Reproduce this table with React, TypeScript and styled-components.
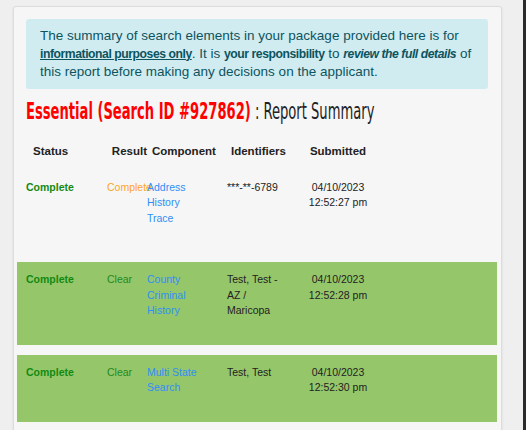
import styled, { createGlobalStyle } from 'styled-components';

const GlobalStyle = createGlobalStyle`
  html, body {
    margin: 0;
    padding: 0;
    background: #efefef;
  }
  body {
    font-family: "Liberation Sans", Arial, sans-serif;
  }
`;

const Page = styled.div`
  box-sizing: border-box;
  width: 526px;
  height: 430px;
  overflow: hidden;
  padding: 6px 21px 0 13px;
  border-right: 3px solid #2b2b2b;
`;

const Card = styled.div`
  box-sizing: border-box;
  width: 489px;
  min-height: 440px;
  background: #f6f6f6;
  border: 1px solid #dcdcdc;
  border-radius: 3px;
  box-shadow: 0 1px 3px rgba(0, 0, 0, 0.08);
  padding: 12px 13px 0 12px;
`;

const Notice = styled.div`
  background: #d1ecf1;
  color: #0c5460;
  border-radius: 3px;
  padding: 8px 14px;
  font-size: 13.5px;
  line-height: 17.5px;
`;

// the bold face in the reference is narrower than Liberation Sans Bold
const Strong = styled.b<{ $underline?: boolean; $italic?: boolean }>`
  font-size: 12.2px;
  letter-spacing: -0.45px;
  text-decoration: ${(p) => (p.$underline ? 'underline' : 'none')};
  font-style: ${(p) => (p.$italic ? 'italic' : 'normal')};
`;

const Heading = styled.h2`
  display: inline-block;
  margin: 10px 0 0;
  font-family: "DejaVu Sans Condensed", "DejaVu Sans", sans-serif;
  font-size: 23.5px;
  line-height: 25px;
  font-weight: normal;
  color: #222;
  white-space: nowrap;
  transform: scaleX(0.62);
  transform-origin: left center;
`;

const HeadingRed = styled.span`
  color: #ff0000;
  font-weight: bold;
`;

const Table = styled.div`
  display: flex;
  flex-direction: column;
  gap: 10px;
  margin: 18px -9px 0 -9px;
`;

const Row = styled.div<{ $green?: boolean; $head?: boolean }>`
  display: grid;
  grid-template-columns: 90px 40px 80px 80px 62px 1fr;
  align-items: start;
  background: ${(p) => (p.$green ? '#96c66a' : 'transparent')};
  padding: ${(p) => (p.$head ? '0' : '10px 0 26px')};
`;

const HeadCell = styled.div<{ $align?: string; $pad?: number }>`
  font-size: 11.5px;
  line-height: 18px;
  font-weight: bold;
  color: #222;
  text-align: ${(p) => p.$align || 'left'};
  padding-left: ${(p) => p.$pad || 0}px;
`;

const Cell = styled.div<{ $color?: string; $bold?: boolean; $pad?: number; $center?: boolean; $narrow?: number }>`
  font-size: 10.5px;
  line-height: 15.5px;
  color: ${(p) => p.$color || '#222'};
  font-weight: ${(p) => (p.$bold ? 'bold' : 'normal')};
  padding-left: ${(p) => p.$pad || 0}px;
  padding-right: ${(p) => p.$narrow || 0}px;
  text-align: ${(p) => (p.$center ? 'center' : 'left')};
  white-space: ${(p) => (p.$center ? 'nowrap' : 'normal')};
`;

const Link = styled.a`
  color: #2f8ff5;
  text-decoration: none;
`;

interface SearchRow {
  result: string;
  resultColor: string;
  component: string;
  identifiers: string;
  date: string;
  time: string;
  green?: boolean;
}

const rows: SearchRow[] = [
  { result: 'Complete', resultColor: '#ffa51e', component: 'Address History Trace', identifiers: '***-**-6789', date: '04/10/2023', time: '12:52:27 pm' },
  { result: 'Clear', resultColor: '#1e8a1e', component: 'County Criminal History', identifiers: 'Test, Test - AZ / Maricopa', date: '04/10/2023', time: '12:52:28 pm', green: true },
  { result: 'Clear', resultColor: '#1e8a1e', component: 'Multi State Search', identifiers: 'Test, Test', date: '04/10/2023', time: '12:52:30 pm', green: true },
];

export default function App() {
  return (
    <>
      <GlobalStyle />
      <Page>
        <Card>
          <Notice>
            The summary of search elements in your package provided here is for{' '}
            <Strong $underline>informational purposes only</Strong>. It is <Strong>your responsibility</Strong> to{' '}
            <Strong $italic>review the full details</Strong> of this report before making any decisions on the applicant.
          </Notice>
          <Heading>
            <HeadingRed>Essential (Search ID #927862)</HeadingRed> : Report Summary
          </Heading>
          <Table>
            <Row $head>
              <HeadCell $pad={16}>Status</HeadCell>
              <HeadCell $align="right">Result</HeadCell>
              <HeadCell $pad={5}>Component</HeadCell>
              <HeadCell $pad={4}>Identifiers</HeadCell>
              <HeadCell $align="center">Submitted</HeadCell>
            </Row>
            {rows.map((r) => (
              <Row key={r.component} $green={r.green}>
                <Cell $bold $pad={9} $color="#128a12">Complete</Cell>
                <Cell $color={r.resultColor}>{r.result}</Cell>
                <Cell $narrow={25}><Link href="#">{r.component}</Link></Cell>
                <Cell $narrow={16}>{r.identifiers}</Cell>
                <Cell $center>{r.date}<br />{r.time}</Cell>
              </Row>
            ))}
          </Table>
        </Card>
      </Page>
    </>
  );
}
